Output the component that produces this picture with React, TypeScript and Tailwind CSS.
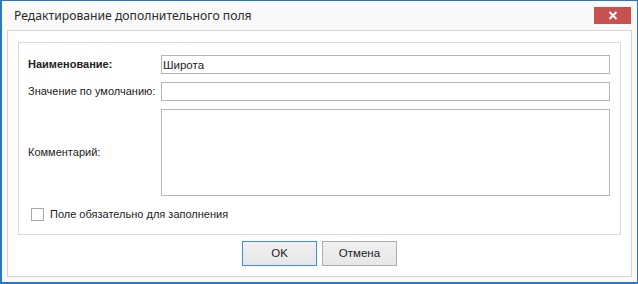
import React from "react";

const titleFont = { fontFamily: '"Noto Sans", "Open Sans", sans-serif' };
const labelFont = { fontFamily: '"Liberation Sans", Arial, sans-serif' };

export default function App() {
  return (
    <div className="w-[638px] h-[284px] bg-[#f9f9f9] border-[#2a78c4] border-t border-r border-l-2 border-b-2 flex flex-col text-[#222]" style={labelFont}>
      {/* Title bar */}
      <div className="h-[29px] flex items-start justify-between shrink-0">
        <div className="pl-[12px] pt-[5px] text-[12.2px] leading-[20px] text-[#2b2b2b] whitespace-nowrap" style={titleFont}>
          Редактирование дополнительного поля
        </div>
        <button className="mt-[6px] mr-[6px] w-[37px] h-[17px] bg-[#c75050] flex items-center justify-center">
          <svg width="10" height="9" viewBox="0 0 10 9">
            <path d="M1.5 1 L8.5 8 M8.5 1 L1.5 8" stroke="#fff" strokeWidth="2" />
          </svg>
        </button>
      </div>

      {/* Content */}
      <div className="flex-1 mx-[5px] mb-[5px] bg-white border border-[#d5d5d5] px-[10px] pt-[11px] flex flex-col">
        <div className="h-[193px] border border-[#d9d9d9] pl-[9px] pr-[10px] pt-[12px] text-[11px] whitespace-nowrap">
          <div className="grid grid-cols-[133px_1fr] gap-y-[8px] items-center">
            <div className="font-bold">Наименование:</div>
            <input
              className="h-[19px] border border-[#b5b5b5] px-[1px] text-[11.5px] outline-none"
              defaultValue="Широта"
              style={labelFont}
            />
            <div>Значение по умолчанию:</div>
            <input className="h-[19px] border border-[#b5b5b5] outline-none" />
            <div>Комментарий:</div>
            <textarea className="h-[87px] border border-[#b5b5b5] outline-none resize-none block" />
          </div>
          <label className="flex items-center mt-[10px] ml-[3px]">
            <span className="w-[13px] h-[13px] border border-[#a8a8a8] bg-white shrink-0" />
            <span className="ml-[6px]">Поле обязательно для заполнения</span>
          </label>
        </div>

        <div className="flex justify-center gap-[5px] mt-[6px] text-[11.5px]">
          <button className="w-[75px] h-[25px] border border-[#3c8ee0] bg-gradient-to-b from-[#f1f1f1] to-[#e6e6e6] text-[#222]">OK</button>
          <button className="w-[75px] h-[25px] border border-[#acacac] bg-gradient-to-b from-[#f1f1f1] to-[#e6e6e6] text-[#222]">Отмена</button>
        </div>
      </div>
    </div>
  );
}
